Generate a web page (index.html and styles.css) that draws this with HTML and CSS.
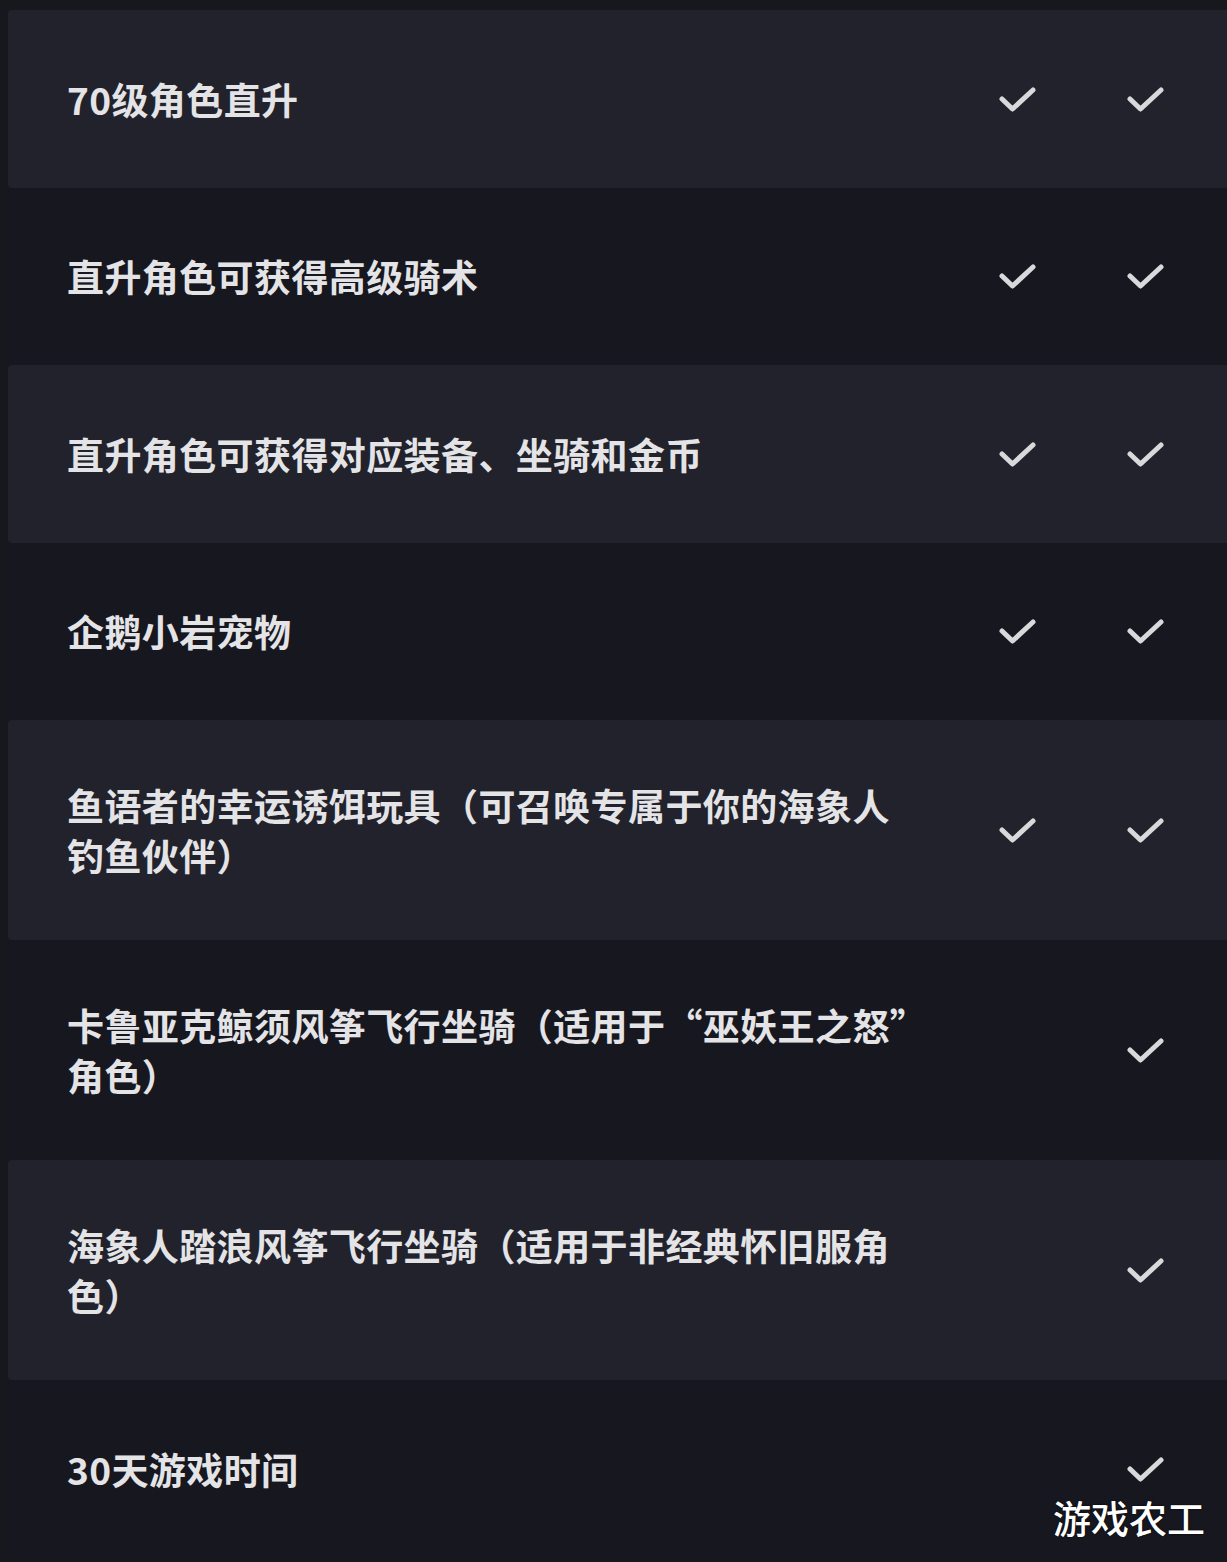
FILE: index.html
```html
<!DOCTYPE html>
<html lang="zh-CN">
<head>
<meta charset="utf-8">
<title>对比表</title>
<link rel="stylesheet" href="styles.css">
</head>
<body>
<div class="table">
  <div class="row alt">
    <div class="label">70级角色直升</div>
    <div class="cell"><svg class="chk" viewBox="0 0 37 27"><polyline points="3,13 13.5,23 34,4"/></svg></div>
    <div class="cell"><svg class="chk" viewBox="0 0 37 27"><polyline points="3,13 13.5,23 34,4"/></svg></div>
  </div>
  <div class="row">
    <div class="label">直升角色可获得高级骑术</div>
    <div class="cell"><svg class="chk" viewBox="0 0 37 27"><polyline points="3,13 13.5,23 34,4"/></svg></div>
    <div class="cell"><svg class="chk" viewBox="0 0 37 27"><polyline points="3,13 13.5,23 34,4"/></svg></div>
  </div>
  <div class="row alt">
    <div class="label">直升角色可获得对应装备、坐骑和金币</div>
    <div class="cell"><svg class="chk" viewBox="0 0 37 27"><polyline points="3,13 13.5,23 34,4"/></svg></div>
    <div class="cell"><svg class="chk" viewBox="0 0 37 27"><polyline points="3,13 13.5,23 34,4"/></svg></div>
  </div>
  <div class="row">
    <div class="label">企鹅小岩宠物</div>
    <div class="cell"><svg class="chk" viewBox="0 0 37 27"><polyline points="3,13 13.5,23 34,4"/></svg></div>
    <div class="cell"><svg class="chk" viewBox="0 0 37 27"><polyline points="3,13 13.5,23 34,4"/></svg></div>
  </div>
  <div class="row alt">
    <div class="label">鱼语者的幸运诱饵玩具（可召唤专属于你的海象人钓鱼伙伴）</div>
    <div class="cell"><svg class="chk" viewBox="0 0 37 27"><polyline points="3,13 13.5,23 34,4"/></svg></div>
    <div class="cell"><svg class="chk" viewBox="0 0 37 27"><polyline points="3,13 13.5,23 34,4"/></svg></div>
  </div>
  <div class="row">
    <div class="label">卡鲁亚克鲸须风筝飞行坐骑（适用于“巫妖王之怒”角色）</div>
    <div class="cell"></div>
    <div class="cell"><svg class="chk" viewBox="0 0 37 27"><polyline points="3,13 13.5,23 34,4"/></svg></div>
  </div>
  <div class="row alt">
    <div class="label">海象人踏浪风筝飞行坐骑（适用于非经典怀旧服角色）</div>
    <div class="cell"></div>
    <div class="cell"><svg class="chk" viewBox="0 0 37 27"><polyline points="3,13 13.5,23 34,4"/></svg></div>
  </div>
  <div class="row">
    <div class="label">30天游戏时间</div>
    <div class="cell"></div>
    <div class="cell"><svg class="chk" viewBox="0 0 37 27"><polyline points="3,13 13.5,23 34,4"/></svg></div>
  </div>
</div>
<div class="watermark">游戏农工</div>
</body>
</html>
```
FILE: styles.css
```css
html, body {
  margin: 0;
  padding: 0;
  background: #17171e;
}
body {
  padding: 10px 0 0 8px;
  height: 1562px;
  box-sizing: border-box;
  overflow: hidden;
  position: relative;
  font-family: "Noto Sans CJK SC", "Noto Sans", sans-serif;
}
.table {
  width: 1225px;
  display: flex;
  flex-direction: column;
}
.row {
  display: grid;
  grid-template-columns: 945px 128px 128px 1fr;
  min-height: 177.5px;
  box-sizing: border-box;
  align-items: center;
  background: #17171f;
  border-radius: 4px;
}
.row.alt {
  background: #21222b;
}
.label {
  padding: 60px 35px 60px 59px;
  color: #e4e4e7;
  font-size: 37px;
  line-height: 50px;
  font-weight: 700;
  letter-spacing: 0.4px;
}
.cell {
  display: flex;
  justify-content: center;
  align-items: center;
}
.chk {
  width: 37px;
  height: 27px;
  display: block;
  margin-top: 1px;
}
.chk polyline {
  fill: none;
  stroke: #d9d9dc;
  stroke-width: 5;
  stroke-linecap: round;
  stroke-linejoin: round;
}
.watermark {
  position: absolute;
  right: 22px;
  top: 1490px;
  color: #ffffff;
  font-size: 38px;
  line-height: 54px;
  font-weight: 500;
  text-shadow: 0 0 2px #000;
}
```
